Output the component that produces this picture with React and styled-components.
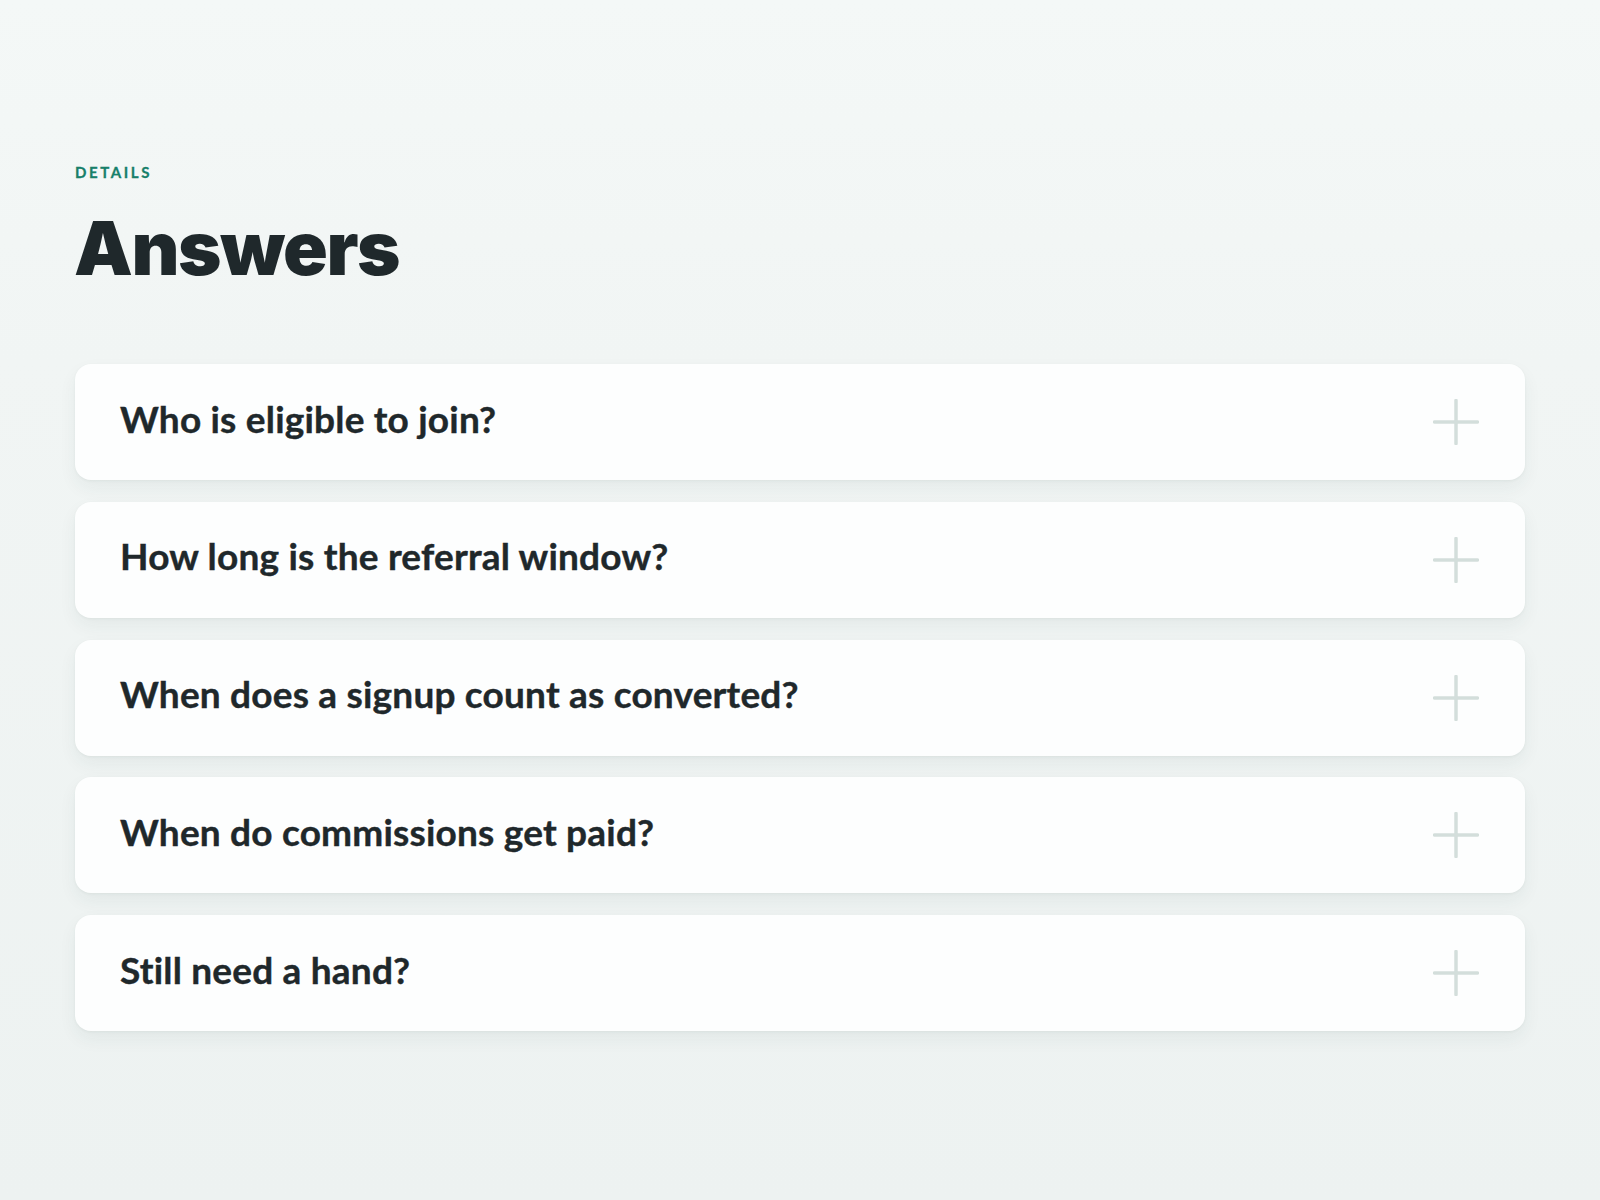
import React from "react";
import styled, { createGlobalStyle } from "styled-components";

const GlobalStyle = createGlobalStyle`
  html, body {
    margin: 0;
    padding: 0;
  }
  body {
    min-height: 1200px;
    background: linear-gradient(180deg, #f4f8f7 0%, #f1f5f4 30%, #edf2f1 100%);
    font-family: Lato, "Noto Sans", sans-serif;
    color: #1f282b;
  }
`;

const questions = [
  "Who is eligible to join?",
  "How long is the referral window?",
  "When does a signup count as converted?",
  "When do commissions get paid?",
  "Still need a hand?",
];

const App = () => {
  return (
    <>
      <GlobalStyle />
      <Page>
        <Header>
          <Eyebrow>Details</Eyebrow>
          <Title>Answers</Title>
        </Header>
        <List>
          {questions.map((q) => (
            <Item key={q}>
              <Question>{q}</Question>
              <PlusIcon />
            </Item>
          ))}
        </List>
      </Page>
    </>
  );
};

export default App;

const PlusIcon = () => (
  <IconBox>
    <svg width="46" height="46" viewBox="0 0 46 46" fill="none">
      <path
        d="M23 1.5v43M1.5 23h43"
        stroke="#d3dedb"
        strokeWidth="3.5"
        strokeLinecap="round"
      />
    </svg>
  </IconBox>
);

const Page = styled.main`
  padding: 163px 75px 120px;
  display: flex;
  flex-direction: column;
`;

const Header = styled.header`
  display: flex;
  flex-direction: column;
  align-items: flex-start;
`;

const Eyebrow = styled.div`
  font-size: 15px;
  line-height: 18px;
  font-weight: 700;
  letter-spacing: 2.6px;
  text-transform: uppercase;
  color: #17806a;
  -webkit-text-stroke: 0.3px #17806a;
`;

const Title = styled.h1`
  margin: 27px 0 0 -1px;
  font-family: Inter, Lato, sans-serif;
  font-size: 74px;
  line-height: 80px;
  font-weight: 900;
  letter-spacing: -1.4px;
  color: #1f282b;
`;

const List = styled.div`
  margin-top: 76px;
  display: flex;
  flex-direction: column;
  gap: 21.8px;
`;

const Item = styled.div`
  height: 116px;
  box-sizing: border-box;
  padding: 0 46px 0 45px;
  display: flex;
  align-items: center;
  justify-content: space-between;
  background: #fdfefe;
  border-radius: 16px;
  box-shadow: 0 8px 18px rgba(40, 70, 62, 0.06), 0 1px 3px rgba(40, 70, 62, 0.05);
  cursor: pointer;
`;

const Question = styled.h3`
  margin: -7px 0 0;
  font-size: 37px;
  line-height: 44px;
  font-weight: 700;
  letter-spacing: 0.2px;
  color: #1f282b;
  -webkit-text-stroke: 0.4px #1f282b;
`;

const IconBox = styled.div`
  width: 46px;
  height: 46px;
  display: flex;
  align-items: center;
  justify-content: center;
`;
